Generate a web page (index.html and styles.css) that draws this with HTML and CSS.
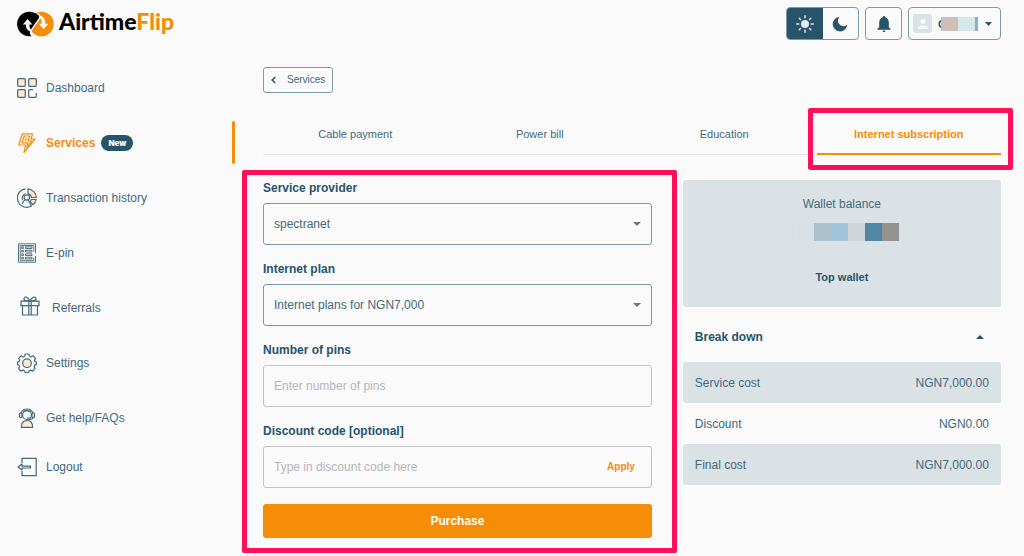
FILE: index.html
```html
<!DOCTYPE html>
<html lang="en">
<head>
  <meta charset="UTF-8" />
  <meta name="viewport" content="width=device-width, initial-scale=1.0" />
  <title>AirtimeFlip - Internet subscription</title>
  <link rel="stylesheet" href="styles.css">
</head>
<body>
  <div class="layout">

    <!-- Sidebar -->
    <aside class="sidebar">
      <a href="#" class="logo">
        <svg width="37" height="26" viewBox="0 0 37 26" aria-hidden="true">
          <circle cx="24.5" cy="13" r="12.3" fill="#f68d08"/>
          <path d="M12.500 .7A12.300 12.300 0 1 0 15.500 24.900Q12.500 22.500 14 19.500L22.500 7Q23.500 4.500 20.500 3.600A12.300 12.300 0 0 0 12.500 .7z" fill="#000"/>
          <path d="M20.500 2.500Q24 4.500 22.500 7.500L14 19.500Q12.500 22.500 15.800 25.500" stroke="#fafafa" stroke-width="1.400" fill="none"/>
          <path d="M14 20.500Q8.500 19.500 8.800 13.500H5.800L10.600 8l4.700 5.500h-2.900Q12.300 17 14 18.500z" fill="#fafafa"/>
          <path d="M23 4.500Q28.600 6.500 28.400 12.700h2.900L26.600 18.300 22 12.700h2.800Q25 8.500 22.500 6.500z" fill="#fafafa"/>
        </svg>
        <span class="logo-text">Airtime<span class="logo-flip">Flip</span></span>
      </a>

      <nav class="menu">
        <a href="#" class="menu-item">
          <svg class="icon" viewBox="0 0 20 20" aria-hidden="true">
            <g class="tint"><rect x=".7" y=".7" width="7.600" height="7.600" rx="1"/><rect x="11.700" y=".7" width="7.600" height="7.600" rx="1"/><rect x=".7" y="11.700" width="7.600" height="7.600" rx="1"/></g>
            <path d="M16 11.700h-3.300a1 1 0 0 0-1 1v5.600a1 1 0 0 0 1 1h5.600a1 1 0 0 0 1-1V15"/>
          </svg>
          Dashboard
        </a>
        <a href="#" class="menu-item active">
          <svg class="icon" viewBox="0 0 20 20" aria-hidden="true">
            <path d="M5.500 .8h10l-1.500 5.400h4L7 19.500l1.500-7.500H1.700z"/>
            <path d="M7.200 3h5.500l-1.500 5h3.500L9.800 14.500l1-4.700H5z"/>
            <path d="M9.500 5L8 8"/>
          </svg>
          Services
          <span class="badge">New</span>
        </a>
        <a href="#" class="menu-item">
          <svg class="icon" viewBox="0 0 20 20" aria-hidden="true">
            <path class="tint" d="M11 .8v5A4.500 4.500 0 0 1 14.500 9.500h4.800A9.300 9.300 0 0 0 11 .8z"/>
            <path class="tint" d="M14.300 11.500h4.900a9 9 0 0 1-3.200 5.300l-2.800-3z"/>
            <path d="M8.500 .8a9.300 9.300 0 1 0 6 17.200l-2-3.500"/>
            <path d="M8.500 5.800A4.600 4.600 0 0 0 5.600 12"/>
            <circle cx="9.800" cy="9.500" r="2.700"/>
            <path d="M5.500 16Q5.800 12.500 8.500 12M11 12q1.500 1 1.500 3"/>
          </svg>
          Transaction history
        </a>
        <a href="#" class="menu-item">
          <svg class="icon thin" viewBox="0 0 20 20" aria-hidden="true">
            <path d="M18.500 10V.8H1.500v18.400h17v-6"/>
            <path d="M3.200 2.500v15.200h13.600v-3M16.800 2.500v6"/>
            <path d="M3.200 2.500h13.600"/>
            <g class="tint"><rect x="4.700" y="3.800" width="1.700" height="1.700"/><rect x="4.700" y="7.300" width="1.700" height="1.700"/><rect x="4.700" y="10.800" width="1.700" height="1.700"/><rect x="4.700" y="14.300" width="1.700" height="1.700"/><rect x="8.500" y="3.800" width="6.500" height="1.700"/><rect x="8.500" y="7.300" width="6.500" height="1.700"/><rect x="8.500" y="10.800" width="6.500" height="1.700"/><rect x="8.500" y="14.300" width="6.500" height="1.700"/></g>
          </svg>
          E-pin
        </a>
        <a href="#" class="menu-item indent">
          <svg class="icon raised" viewBox="0 0 20 20" aria-hidden="true">
            <rect x="1" y="5.200" width="18" height="4.500"/>
            <path d="M2.500 9.700v9.300h15V9.700M8.800 5.200V19M11.200 5.200V19"/>
            <path d="M10 5C8 .5 4.500 0 4 2.500S7 5 10 5zM10 5c2-4.500 5.500-5 6-2.500S13 5 10 5z"/>
          </svg>
          Referrals
        </a>
        <a href="#" class="menu-item">
          <svg class="icon" viewBox="0 0 20 20" aria-hidden="true">
            <path d="M8.200 1h3.600l.6 2.300 1.600.7 2.100-1.200 2.500 2.600L17.400 7.400l.5 1.300 1.700.5v2.200l-1.900.7-.6 1.500 1 2-2.400 2.500-2.200-1-1.500.6-.6 2H8.300l-.7-2-1.500-.6-2.200 1-2.300-2.500 1-2-.7-1.500L.4 11.400V9.200l1.700-.5.6-1.400-1.100-2L4 2.800 6 4l1.600-.7z"/>
            <circle class="tint" cx="10" cy="10.200" r="4.300"/>
          </svg>
          Settings
        </a>
        <a href="#" class="menu-item">
          <svg class="icon" viewBox="0 0 20 20" aria-hidden="true">
            <path class="tint" d="M4.300 19.300c0-4 1.700-6.800 5.700-6.800s5.700 2.800 5.700 6.800z"/>
            <circle cx="10" cy="7" r="4.500"/>
            <path d="M4 5a6.500 6.500 0 0 1 12 0M6 4.300Q10 .8 14 4.300"/>
            <rect x="2.500" y="5" width="2.500" height="4.500" rx="1"/><rect x="15" y="5" width="2.500" height="4.500" rx="1"/>
            <path d="M16.300 9.500Q15 12 11.500 11.200M10 10h3"/>
          </svg>
          Get help/FAQs
        </a>
        <a href="#" class="menu-item last">
          <svg class="icon" viewBox="0 0 20 20" aria-hidden="true">
            <path d="M5 6V1.300h14.200v17.400H5V14"/>
            <path d="M1 10l4-3v2.200h8.500v1.800H5V13z"/>
          </svg>
          Logout
        </a>
      </nav>
    </aside>

    <!-- Main content -->
    <main class="main">
      <header class="topbar">
        <div class="theme-switch">
          <button class="theme-btn selected" aria-label="Light mode">
            <svg width="20" height="20" viewBox="0 0 20 20" aria-hidden="true">
              <circle cx="10" cy="10" r="4" fill="#e4e6e7"/>
              <path d="M10 1.800v2M10 16.200v2M1.800 10h2M16.200 10h2M4.200 4.200l1.300 1.300M14.500 14.500l1.300 1.300M4.200 15.800l1.300-1.300M14.500 5.500l1.300-1.300" stroke="#e4e6e7" stroke-width="1.500" stroke-linecap="round"/>
            </svg>
          </button>
          <button class="theme-btn" aria-label="Dark mode">
            <svg width="16" height="16" viewBox="0 0 16 16" aria-hidden="true">
              <path d="M7.500 .8A7.300 7.300 0 1 0 15.300 8.500 4.700 4.700 0 1 1 7.500 .8z" fill="#27536b"/>
            </svg>
          </button>
        </div>
        <button class="bell" aria-label="Notifications">
          <svg width="14" height="16" viewBox="0 0 14 16" aria-hidden="true">
            <path d="M7 0a1.200 1.200 0 0 1 1.200 1.300C10.500 2 11.800 4 11.800 6.500V11l1.700 1.700v1.100H.5v-1.100L2.200 11V6.500C2.200 4 3.500 2 5.800 1.300A1.200 1.200 0 0 1 7 0zM5.500 14.500h3A1.500 1.500 0 0 1 5.500 14.500z" fill="#27536b"/>
          </svg>
        </button>
        <button class="user" aria-label="Account menu">
          <span class="avatar">
            <svg width="10" height="10" viewBox="0 0 10 10" aria-hidden="true">
              <circle cx="5" cy="2.500" r="2.500" fill="#fafafa"/><path d="M0 10V8.500Q1.500 6.200 5 6.200t5 2.300V10z" fill="#fafafa"/>
            </svg>
          </span>
          <span class="user-name">C</span>
          <span class="user-mask"><i class="tan"></i><i class="mint"></i><i class="blue"></i></span>
          <svg width="7" height="4" viewBox="0 0 7 4" aria-hidden="true"><path d="M0 0h7L3.500 4z" fill="#27536b"/></svg>
        </button>
      </header>

      <button class="back">
        <svg width="5" height="8" viewBox="0 0 5 8" aria-hidden="true"><path d="M4.200 1L1.200 4l3 3" stroke="#27536b" stroke-width="1.500" fill="none"/></svg>
        Services
      </button>

      <nav class="tabs">
        <a href="#" class="tab">Cable payment</a>
        <a href="#" class="tab">Power bill</a>
        <a href="#" class="tab">Education</a>
        <a href="#" class="tab active">Internet subscription</a>
      </nav>

      <div class="content">
        <form class="form">
          <div class="field">
            <label for="provider">Service provider</label>
            <div class="control">
              <select id="provider"><option>spectranet</option></select>
              <svg class="arrow" width="8" height="4" viewBox="0 0 8 4" aria-hidden="true"><path d="M0 0h8L4 4z" fill="#757575"/></svg>
            </div>
          </div>
          <div class="field">
            <label for="plan">Internet plan</label>
            <div class="control">
              <select id="plan"><option>Internet plans for NGN7,000</option></select>
              <svg class="arrow" width="8" height="4" viewBox="0 0 8 4" aria-hidden="true"><path d="M0 0h8L4 4z" fill="#757575"/></svg>
            </div>
          </div>
          <div class="field">
            <label for="pins">Number of pins</label>
            <div class="control light">
              <input id="pins" type="text" placeholder="Enter number of pins">
            </div>
          </div>
          <div class="field">
            <label for="discount">Discount code [optional]</label>
            <div class="control light">
              <input id="discount" type="text" placeholder="Type in discount code here">
              <button type="button" class="apply">Apply</button>
            </div>
          </div>
          <button type="button" class="purchase">Purchase</button>
        </form>

        <section class="summary">
          <div class="wallet">
            <span>Wallet balance</span>
            <div class="wallet-mask"><i class="m1"></i><i class="m2"></i><i class="m3"></i><i class="m4"></i><i class="m5"></i><i class="m6"></i></div>
            <a href="#" class="top-wallet">Top wallet</a>
          </div>

          <details class="breakdown" open>
            <summary>
              Break down
              <svg width="8" height="4" viewBox="0 0 8 4" aria-hidden="true"><path d="M0 4h8L4 0z" fill="#27536b"/></svg>
            </summary>
            <table>
              <tr><th scope="row">Service cost</th><td>NGN7,000.00</td></tr>
              <tr><th scope="row">Discount</th><td>NGN0.00</td></tr>
              <tr><th scope="row">Final cost</th><td>NGN7,000.00</td></tr>
            </table>
          </details>
        </section>
      </div>
    </main>
  </div>
</body>
</html>
```

FILE: styles.css
```css
* {
  box-sizing: border-box;
}

body {
  margin: 0;
  background: #fafafa;
  color: #44697d;
  font-family: "Liberation Sans", Arial, sans-serif;
  font-size: 12px;
  line-height: 16px;
}

a {
  color: inherit;
  text-decoration: none;
}

button,
input,
select {
  font: inherit;
  color: inherit;
  background: none;
  border: none;
  padding: 0;
  margin: 0;
}

button {
  cursor: pointer;
}

svg {
  flex: none;
}

.layout {
  display: grid;
  grid-template-columns: 235px 1fr;
}

/* Sidebar */
.logo {
  display: flex;
  align-items: center;
  gap: 5px;
  height: 48px;
  padding-left: 17px;
  margin-bottom: 12px;
}

.logo-text {
  font-family: Lato, sans-serif;
  font-size: 23px;
  font-weight: 900;
  line-height: 40px;
  color: #000;
  padding-bottom: 6px;
}

.logo-flip {
  color: #f68d08;
}

.menu {
  display: flex;
  flex-direction: column;
}

.menu-item {
  display: flex;
  align-items: center;
  height: 55px;
  gap: 9px;
  padding-left: 17px;
}

.menu-item.indent {
  padding-left: 20px;
  gap: 12px;
}

.menu-item.last {
  height: 44px;
}

.menu-item.active {
  color: #f68d08;
  font-weight: bold;
}

.menu-item.active::after {
  content: "";
  width: 3px;
  height: 43px;
  margin-left: auto;
  background: #f68d08;
  border-radius: 2px;
}

.icon {
  width: 20px;
  height: 20px;
  fill: none;
  stroke: #44697d;
  stroke-width: 1.2;
  stroke-linejoin: round;
}

.icon .tint {
  fill: #ffe8cc;
}

.icon.thin {
  stroke-width: 0.9;
}

.icon.raised {
  margin-bottom: 4px;
}

.active .icon {
  stroke: #f68d08;
}

.badge {
  background: #27536b;
  color: #fff;
  font-size: 8px;
  font-weight: 900;
  font-family: Inter, sans-serif;
  padding: 0 7px;
  margin-left: -3px;
  border-radius: 8px;
}

/* Main */
.main {
  padding: 7px 23px 18px 28px;
}

.topbar {
  display: flex;
  justify-content: flex-end;
  gap: 6px;
  height: 33px;
  margin-bottom: 27px;
}

.theme-switch,
.bell,
.user {
  border: 1px solid #7e98a6;
  border-radius: 4px;
}

.theme-switch {
  display: flex;
  width: 73px;
  overflow: hidden;
}

.theme-btn {
  display: flex;
  flex: 1;
  align-items: center;
  justify-content: center;
}

.theme-btn.selected {
  background: #27536b;
}

.bell {
  display: flex;
  align-items: center;
  justify-content: center;
  width: 37px;
}

.user {
  display: flex;
  align-items: center;
  width: 93px;
  padding: 0 8px 0 4px;
}

.avatar {
  display: flex;
  align-items: center;
  justify-content: center;
  width: 19px;
  height: 19px;
  margin-right: 6px;
  background: #dbe2e5;
  border-radius: 3px;
}

.user-name {
  width: 3px;
  font-size: 11px;
  font-weight: bold;
  color: #27536b;
}

.user-mask {
  display: flex;
  height: 14px;
  margin-right: auto;
}

.user-mask i {
  width: 17px;
}

.tan { background: #cdbfb5; }
.mint { background: #d5e7e8; }
.user-mask .blue { width: 3px; background: #85b0cb; }

.back {
  display: flex;
  align-items: center;
  gap: 11px;
  height: 26px;
  padding: 0 7px;
  font-size: 10px;
  border: 1px solid #7e98a6;
  border-radius: 3px;
}

.tabs {
  display: grid;
  grid-template-columns: repeat(4, 1fr);
  height: 39px;
  margin-top: 23px;
  font-size: 11px;
  text-align: center;
  line-height: 37px;
  box-shadow: inset 0 -1px #e6ebef;
}

.tab.active {
  position: relative;
  color: #f68d08;
  font-weight: bold;
  border-bottom: 2px solid #f68d08;
}

/* Pink highlight frames drawn over the page */
.tab.active::after,
.form::after {
  content: "";
  position: absolute;
  border: 5px solid #ff0f5a;
  border-radius: 2px;
  pointer-events: none;
}

.tab.active::after {
  inset: -8px -12px -17px -9px;
}

.form::after {
  inset: -10px -25px -15px -21px;
}

.content {
  display: grid;
  grid-template-columns: 11fr 9fr;
  align-items: start;
  gap: 31px;
  margin-top: 25px;
}

/* Form */
.form {
  position: relative;
}

.field {
  margin-bottom: 16px;
}

.field label {
  display: block;
  margin-bottom: 7px;
  font-weight: bold;
  color: #27536b;
}

.control {
  display: flex;
  align-items: center;
  height: 42px;
  padding-right: 10px;
  border: 1px solid #7e98a6;
  border-radius: 3px;
}

.control.light {
  border-color: #c2c3c5;
}

.control select,
.control input {
  flex: 1;
  min-width: 0;
  height: 100%;
  padding-left: 10px;
  appearance: none;
  outline: none;
}

.control .arrow {
  pointer-events: none;
}

input::placeholder {
  color: #b5b7b9;
}

.apply {
  margin-right: 6px;
  font-size: 10px;
  font-weight: bold;
  color: #f68d08;
}

.purchase {
  width: 100%;
  height: 34px;
  background: #f58d06;
  color: #fff;
  font-weight: bold;
  border-radius: 3px;
}

/* Wallet and cost summary */
.wallet {
  display: flex;
  flex-direction: column;
  align-items: center;
  padding: 16px 0 22px;
  background: #dbe2e5;
  border-radius: 3px;
}

.wallet-mask {
  display: flex;
  margin: 11px 0 28px 12px;
}

.wallet-mask i {
  width: 17px;
  height: 18px;
}

.m1 { background: #d7e0e6; }
.m2 { background: #abc2ce; }
.m3 { background: #a0c5da; }
.m4 { background: #ced6d9; }
.m5 { background: #5385a5; }
.m6 { background: #939392; }

.top-wallet {
  font-size: 11px;
  font-weight: bold;
  color: #27536b;
}

.breakdown summary {
  display: flex;
  align-items: center;
  justify-content: space-between;
  padding: 22px 17px 17px 12px;
  font-weight: bold;
  color: #27536b;
  list-style: none;
  cursor: pointer;
}

.breakdown table {
  width: 100%;
  border-collapse: separate;
  border-spacing: 0;
}

.breakdown th,
.breakdown td {
  height: 41px;
  padding: 0 12px;
  font-weight: normal;
  text-align: left;
}

.breakdown td {
  text-align: right;
}

.breakdown tr:nth-child(odd) > * {
  background: #dbe2e5;
}

.breakdown th {
  border-radius: 3px 0 0 3px;
}

.breakdown td {
  border-radius: 0 3px 3px 0;
}
```
